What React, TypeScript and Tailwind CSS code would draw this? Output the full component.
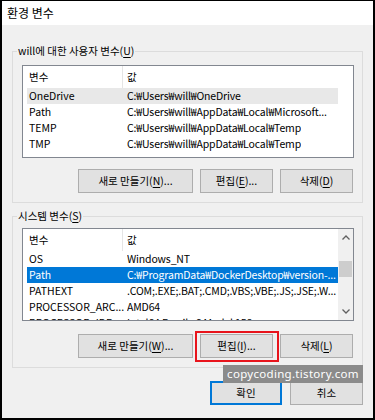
import type { ReactNode } from 'react'

type Row = { name: string; value: string }

const userRows: Row[] = [
  { name: 'OneDrive', value: 'C:₩Users₩will₩OneDrive' },
  { name: 'Path', value: 'C:₩Users₩will₩AppData₩Local₩Microsoft...' },
  { name: 'TEMP', value: 'C:₩Users₩will₩AppData₩Local₩Temp' },
  { name: 'TMP', value: 'C:₩Users₩will₩AppData₩Local₩Temp' },
]

const systemRows: Row[] = [
  { name: 'OS', value: 'Windows_NT' },
  { name: 'Path', value: 'C:₩ProgramData₩DockerDesktop₩version-...' },
  { name: 'PATHEXT', value: '.COM;.EXE;.BAT;.CMD;.VBS;.VBE;.JS;.JSE;.W...' },
  { name: 'PROCESSOR_ARC...', value: 'AMD64' },
  { name: 'PROCESSOR_IDE...', value: 'Intel64 Family 6 Model 158...' },
]

// accelerator key, e.g. (U) with the letter underlined
const Key = ({ k }: { k: string }) => (
  <>
    (<span className="underline underline-offset-2">{k}</span>)
  </>
)

const Btn = ({ children, w, primary }: { children: ReactNode; w: string; primary?: boolean }) => (
  <button
    type="button"
    className={`${w} h-[24px] flex items-center justify-center bg-[#e1e1e1] text-black ${
      primary ? 'border-2 border-[#0078d7]' : 'border border-[#adadad]'
    }`}
  >
    {children}
  </button>
)

const Chevron = ({ up }: { up?: boolean }) => (
  <svg width="8" height="5" viewBox="0 0 8 5" className="mx-auto">
    <polyline
      points={up ? '0.5,4.5 4,1 7.5,4.5' : '0.5,0.5 4,4 7.5,0.5'}
      fill="none"
      stroke="#606060"
      strokeWidth="1.3"
    />
  </svg>
)

const VarList = ({
  rows,
  selected,
  active,
  scroll,
}: {
  rows: Row[]
  selected: number
  active?: boolean
  scroll?: boolean
}) => (
  <div className="flex h-[93px] border border-[#828790] bg-white overflow-hidden">
    <div className="flex-1 min-w-0">
      <div className="flex h-[22px] items-center">
        <div className="w-[99px] pl-[6px]">변수</div>
        <div className="w-px h-full bg-[#e5e5e5]" />
        <div className="pl-[4px]">값</div>
      </div>
      <div className="pl-[4px]">
        {rows.map((row, i) => {
          const isSel = i === selected
          return (
            <div
              key={row.name}
              className={`flex h-[16px] leading-[16px] whitespace-nowrap ${
                isSel ? (active ? 'bg-[#0078d7] text-white' : 'bg-[#e8e8e8]') : ''
              }`}
            >
              <div className="w-[100px] shrink-0 pl-[2px] overflow-hidden">{row.name}</div>
              <div className="overflow-hidden tracking-[-0.15px]">{row.value}</div>
            </div>
          )
        })}
      </div>
    </div>
    {scroll ? (
      <div className="w-[15px] bg-[#f0f0f0] flex flex-col">
        <div className="h-[17px] flex items-center">
          <Chevron up />
        </div>
        <div className="flex-1 pt-[15px]">
          <div className="ml-[1px] w-[13px] h-[16px] bg-[#cdcdcd]" />
        </div>
        <div className="h-[17px] flex items-center">
          <Chevron />
        </div>
      </div>
    ) : (
      <div className="w-[15px]" />
    )}
  </div>
)

export default function App() {
  return (
    <div className="relative w-[375px] h-[420px] overflow-hidden bg-[#f0f0f0] border-black border-l-2 border-t border-r-2 border-b-2 font-['Noto_Sans_CJK_KR',sans-serif] text-[10.5px] text-black">
      <div className="h-[24px] bg-white flex items-center pl-[5px] text-[12px]">환경 변수</div>

      <div className="px-[10px]">
        <div className="mt-[26px] relative border border-[#dcdcdc] pl-[9px] pr-[8px] pt-[13px] pb-[9px]">
          <span className="absolute left-[4px] -top-[9px] px-[1px] bg-[#f0f0f0] leading-[16px]">
            will에 대한 사용자 변수<Key k="U" />
          </span>
          <VarList rows={userRows} selected={0} />
          <div className="mt-[11px] pr-[1px] flex justify-end gap-[7px]">
            <Btn w="w-[115px]">
              새로 만들기<Key k="N" />...
            </Btn>
            <Btn w="w-[73px]">
              편집<Key k="E" />...
            </Btn>
            <Btn w="w-[73px]">
              삭제<Key k="D" />
            </Btn>
          </div>
        </div>

        <div className="mt-[13px] relative border border-[#dcdcdc] pl-[9px] pr-[8px] pt-[11px] pb-[9px]">
          <span className="absolute left-[4px] -top-[9px] px-[1px] bg-[#f0f0f0] leading-[16px]">
            시스템 변수<Key k="S" />
          </span>
          <VarList rows={systemRows} selected={1} active scroll />
          <div className="mt-[13px] pr-[1px] flex justify-end gap-[7px]">
            <Btn w="w-[115px]">
              새로 만들기<Key k="W" />...
            </Btn>
            <div className="relative">
              <Btn w="w-[73px]">
                편집<Key k="I" />...
              </Btn>
              <div className="absolute -left-[5px] -right-[6px] -top-[3px] -bottom-[4px] border-2 border-[#e8141c]" />
            </div>
            <Btn w="w-[73px]">
              삭제<Key k="L" />
            </Btn>
          </div>
        </div>

        <div className="mt-[13px] flex justify-end gap-[8px]">
          <Btn w="w-[72px]" primary>
            확인
          </Btn>
          <Btn w="w-[73px]">취소</Btn>
        </div>
      </div>

      <div className="absolute left-[221px] top-[364px] w-[140px] h-[18px] bg-[#8b8b8b] flex items-center justify-center text-white text-[11.5px] tracking-[0.3px] font-['Noto_Sans',sans-serif]">
        copycoding.tistory.com
      </div>
    </div>
  )
}
